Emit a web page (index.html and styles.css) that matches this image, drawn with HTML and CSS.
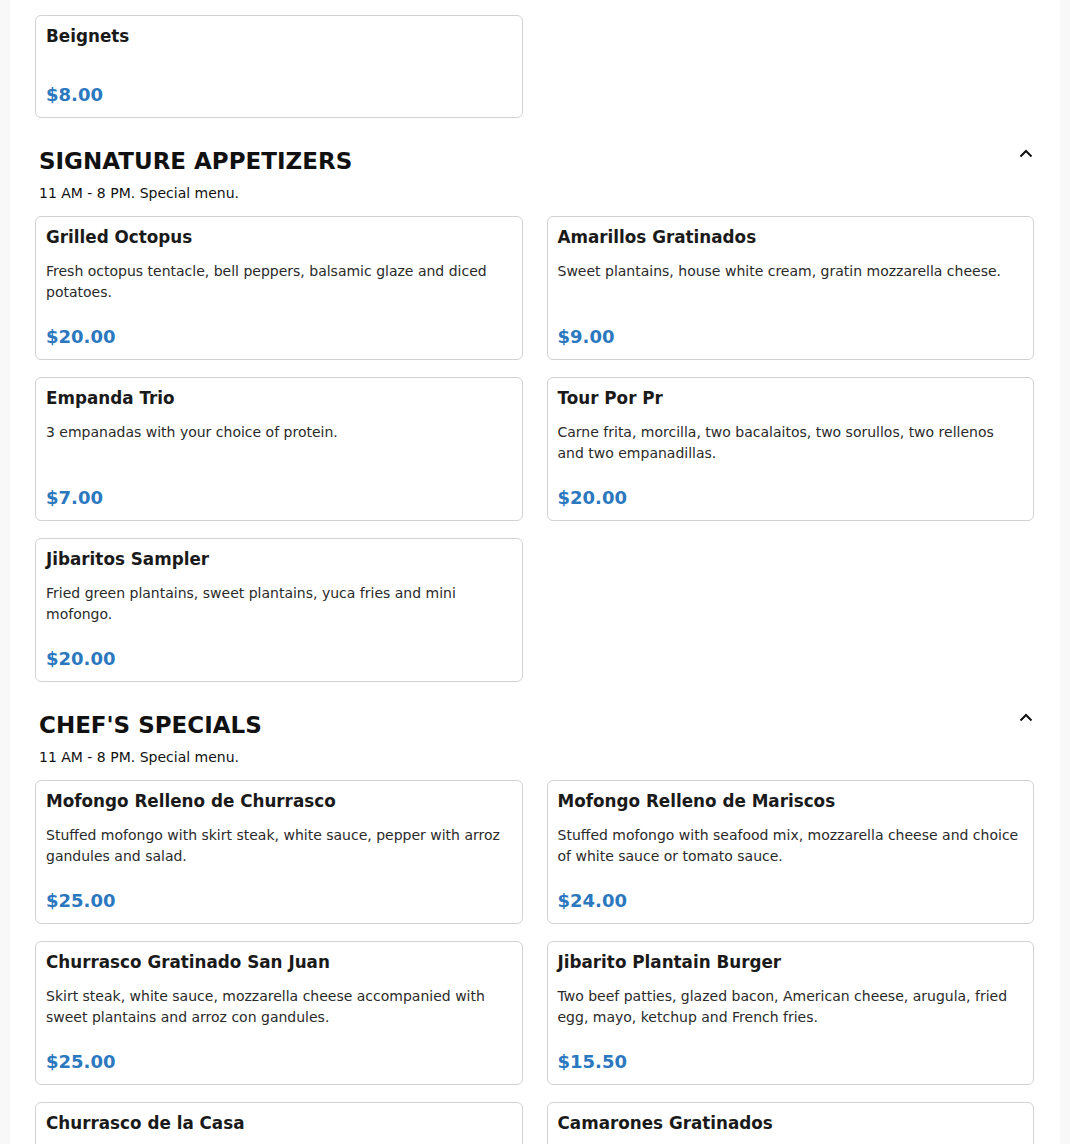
FILE: index.html
```html
<!DOCTYPE html>
<html lang="en">
<head>
<meta charset="utf-8">
<title>Menu</title>
<link rel="stylesheet" href="styles.css">
</head>
<body>
<main class="menu">
  <section class="section section-first">
    <div class="grid">
      <article class="card">
        <h3 class="card-title">Beignets</h3>
        <p class="card-desc"></p>
        <div class="card-price">$8.00</div>
      </article>
    </div>
  </section>

  <section class="section">
    <header class="section-head">
      <div class="section-text">
        <h2 class="section-title">SIGNATURE APPETIZERS</h2>
        <p class="section-sub">11 AM - 8 PM. Special menu.</p>
      </div>
      <button class="toggle" aria-label="Collapse"><svg viewBox="0 0 14 10" width="14" height="10"><polyline points="1.5,8.5 7,3 12.5,8.5" fill="none" stroke="#111" stroke-width="2"/></svg></button>
    </header>
    <div class="grid">
      <article class="card">
        <h3 class="card-title">Grilled Octopus</h3>
        <p class="card-desc">Fresh octopus tentacle, bell peppers, balsamic glaze and diced potatoes.</p>
        <div class="card-price">$20.00</div>
      </article>
      <article class="card">
        <h3 class="card-title">Amarillos Gratinados</h3>
        <p class="card-desc">Sweet plantains, house white cream, gratin mozzarella cheese.</p>
        <div class="card-price">$9.00</div>
      </article>
      <article class="card">
        <h3 class="card-title">Empanda Trio</h3>
        <p class="card-desc">3 empanadas with your choice of protein.</p>
        <div class="card-price">$7.00</div>
      </article>
      <article class="card">
        <h3 class="card-title">Tour Por Pr</h3>
        <p class="card-desc">Carne frita, morcilla, two bacalaitos, two sorullos, two rellenos and two empanadillas.</p>
        <div class="card-price">$20.00</div>
      </article>
      <article class="card">
        <h3 class="card-title">Jibaritos Sampler</h3>
        <p class="card-desc">Fried green plantains, sweet plantains, yuca fries and mini mofongo.</p>
        <div class="card-price">$20.00</div>
      </article>
    </div>
  </section>

  <section class="section">
    <header class="section-head">
      <div class="section-text">
        <h2 class="section-title">CHEF'S SPECIALS</h2>
        <p class="section-sub">11 AM - 8 PM. Special menu.</p>
      </div>
      <button class="toggle" aria-label="Collapse"><svg viewBox="0 0 14 10" width="14" height="10"><polyline points="1.5,8.5 7,3 12.5,8.5" fill="none" stroke="#111" stroke-width="2"/></svg></button>
    </header>
    <div class="grid">
      <article class="card">
        <h3 class="card-title">Mofongo Relleno de Churrasco</h3>
        <p class="card-desc">Stuffed mofongo with skirt steak, white sauce, pepper with arroz gandules and salad.</p>
        <div class="card-price">$25.00</div>
      </article>
      <article class="card">
        <h3 class="card-title">Mofongo Relleno de Mariscos</h3>
        <p class="card-desc">Stuffed mofongo with seafood mix, mozzarella cheese and choice of white sauce or tomato sauce.</p>
        <div class="card-price">$24.00</div>
      </article>
      <article class="card">
        <h3 class="card-title">Churrasco Gratinado San Juan</h3>
        <p class="card-desc">Skirt steak, white sauce, mozzarella cheese accompanied with sweet plantains and arroz con gandules.</p>
        <div class="card-price">$25.00</div>
      </article>
      <article class="card">
        <h3 class="card-title">Jibarito Plantain Burger</h3>
        <p class="card-desc">Two beef patties, glazed bacon, American cheese, arugula, fried egg, mayo, ketchup and French fries.</p>
        <div class="card-price">$15.50</div>
      </article>
      <article class="card">
        <h3 class="card-title">Churrasco de la Casa</h3>
        <p class="card-desc">Skirt steak with chimichurri sauce, served with white rice and beans.</p>
        <div class="card-price">$24.00</div>
      </article>
      <article class="card">
        <h3 class="card-title">Camarones Gratinados</h3>
        <p class="card-desc">Shrimp in white sauce, gratin mozzarella cheese, served with white rice.</p>
        <div class="card-price">$22.00</div>
      </article>
    </div>
  </section>
</main>
</body>
</html>
```

FILE: styles.css
```css
html, body {
  margin: 0;
  padding: 0;
  background: #f8f8f8;
}

body {
  font-family: "DejaVu Sans", "Liberation Sans", sans-serif;
  color: #1f1f1f;
}

.menu {
  width: 1050px;
  margin: 0 auto;
  background: #ffffff;
  box-sizing: border-box;
  padding: 15px 26px 40px 25px;
  min-height: 1144px;
}

.section {
  margin-top: 29px;
}

.section-first {
  margin-top: 0;
}

.section-head {
  display: flex;
  justify-content: space-between;
  align-items: flex-start;
  padding: 0 1px 0 4px;
  margin-bottom: 12px;
}

.section-title {
  margin: 0;
  font-size: 23px;
  line-height: 28px;
  font-weight: bold;
  color: #111;
}

.section-sub {
  margin: 8px 0 0;
  font-size: 14px;
  line-height: 21px;
  color: #111;
}

.toggle {
  border: 0;
  background: transparent;
  padding: 0;
  margin-top: 1px;
  width: 14px;
  height: 10px;
  display: flex;
}

.grid {
  display: grid;
  grid-template-columns: 1fr 1fr;
  column-gap: 24px;
  row-gap: 17px;
}

.card {
  border: 1px solid #d2d2d2;
  border-radius: 6px;
  padding: 10px;
  display: flex;
  flex-direction: column;
}

.card-title {
  margin: 0 0 14px;
  font-size: 16.8px;
  line-height: 20px;
  font-weight: bold;
  color: #1a1a1a;
}

.card-desc {
  margin: 0;
  font-size: 14px;
  line-height: 21px;
  color: #2a2a2a;
}

.card-desc:empty {
  min-height: 1px;
}

.card-price {
  margin-top: auto;
  padding-top: 22px;
  font-size: 18px;
  line-height: 24px;
  font-weight: bold;
  color: #2b78bf;
}
```
